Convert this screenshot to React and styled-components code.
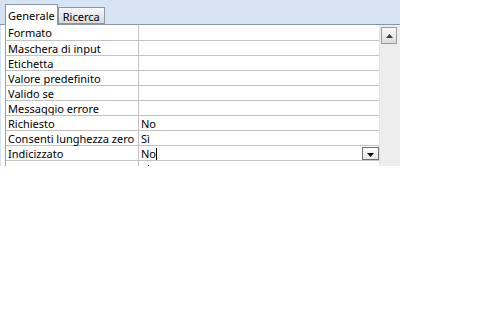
import React from 'react';
import styled, { createGlobalStyle } from 'styled-components';

const GlobalStyle = createGlobalStyle`
  html, body {
    margin: 0;
    padding: 0;
    background: #ffffff;
  }
  body {
    font-family: "Noto Sans", "Open Sans", Arial, sans-serif;
    font-size: 11px;
    color: #000;
  }
`;

const rows = [
  { label: 'Formato', value: '' },
  { label: 'Maschera di input', value: '' },
  { label: 'Etichetta', value: '' },
  { label: 'Valore predefinito', value: '' },
  { label: 'Valido se', value: '' },
  { label: 'Messaggio errore', value: '' },
  { label: 'Richiesto', value: 'No' },
  { label: 'Consenti lunghezza zero', value: 'Sì' },
  { label: 'Indicizzato', value: 'No', active: true },
  { label: '', value: '', dot: true },
];

function App() {
  return (
    <>
      <GlobalStyle />
      <Panel>
        <TabStrip>
          <Tab $active>Generale</Tab>
          <Tab>Ricerca</Tab>
        </TabStrip>
        <Body>
          <Sheet>
            {rows.map((row, i) => (
              <Row key={i}>
                <Label>{row.label}</Label>
                <Value>
                  {row.value}
                  {row.active && <Caret />}
                  {row.dot && <Dot />}
                  {row.active && (
                    <DropButton>
                      <svg width="7" height="4" viewBox="0 0 7 4">
                        <path d="M0 0h7L3.5 4z" fill="#000" />
                      </svg>
                    </DropButton>
                  )}
                </Value>
              </Row>
            ))}
          </Sheet>
          <ScrollBar>
            <ScrollButton>
              <svg width="7" height="4" viewBox="0 0 7 4">
                <path d="M3.5 0L7 4H0z" fill="#3a3a3a" />
              </svg>
            </ScrollButton>
          </ScrollBar>
        </Body>
      </Panel>
    </>
  );
}

export default App;

const Panel = styled.div`
  width: 400px;
  height: 166px;
  overflow: hidden;
  background: #ffffff;
`;

const TabStrip = styled.div`
  display: flex;
  align-items: flex-end;
  height: 24px;
  padding-left: 5px;
  background: #d5e3f3;
  border-bottom: 1px solid #8c95a8;
`;

const Tab = styled.div`
  box-sizing: border-box;
  height: ${(p) => (p.$active ? '21px' : '17px')};
  margin-bottom: ${(p) => (p.$active ? '-1px' : '0')};
  padding: ${(p) => (p.$active ? '3px 2px 0 2px' : '1px 4px 0 4px')};
  border: 1px solid #8c95a8;
  border-bottom: ${(p) => (p.$active ? 'none' : '1px solid #8c95a8')};
  background: ${(p) =>
    p.$active ? '#ffffff' : 'linear-gradient(#f7f7f7, #d9d9d9)'};
  line-height: 15px;
  position: relative;
  z-index: ${(p) => (p.$active ? 1 : 0)};
`;

const Body = styled.div`
  display: flex;
  height: 141px;
  padding-left: 5px;
  box-shadow: inset 1px 0 0 #d5e3f3;
`;

const Sheet = styled.div`
  width: 375px;
  border-left: 1px solid #a0a0a0;
`;

const Row = styled.div`
  display: grid;
  grid-template-columns: 133px 1fr;
  height: 15px;
  border-bottom: 1px solid #c2c2c2;
  box-sizing: border-box;
  &:first-child {
    height: 16px;
  }
`;

const Label = styled.div`
  padding-left: 2px;
  padding-top: 1px;
  line-height: 14px;
  white-space: nowrap;
  border-right: 1px solid #c2c2c2;
  overflow: hidden;
`;

const Value = styled.div`
  position: relative;
  padding-left: 2px;
  padding-top: 1px;
  line-height: 14px;
  white-space: nowrap;
`;

const Caret = styled.span`
  display: inline-block;
  width: 1px;
  height: 12px;
  background: #000;
  vertical-align: -2px;
`;

const Dot = styled.span`
  position: absolute;
  left: 9px;
  top: 4px;
  width: 1px;
  height: 1px;
  background: #333;
`;

const DropButton = styled.div`
  position: absolute;
  right: 0;
  top: 1px;
  width: 17px;
  height: 13px;
  box-sizing: border-box;
  border: 1px solid #6e6e6e;
  background: linear-gradient(#ffffff, #e8e8e8);
  display: flex;
  align-items: flex-end;
  justify-content: center;
  padding-bottom: 2px;
`;

const ScrollBar = styled.div`
  width: 19px;
  background: #ededed;
  border-left: 1px solid #e2e2e2;
  padding: 2px 0 0 1px;
`;

const ScrollButton = styled.div`
  width: 16px;
  height: 17px;
  box-sizing: border-box;
  border: 1px solid #9a9a9a;
  background: linear-gradient(#fafafa, #dcdcdc);
  display: flex;
  align-items: center;
  justify-content: center;
`;
